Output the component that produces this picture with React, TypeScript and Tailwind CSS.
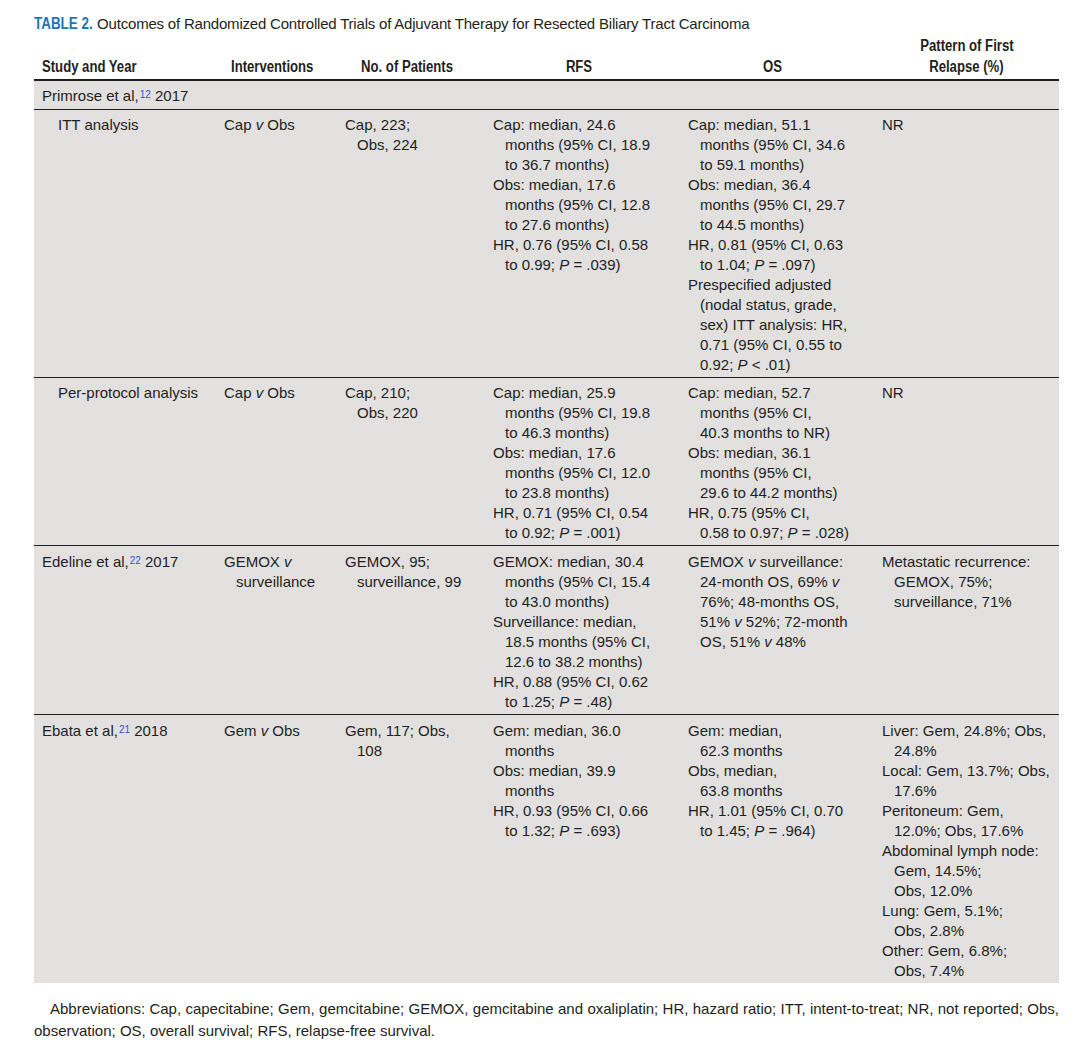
import React from "react";

type Line = React.ReactNode;
type Para = Line[];

const P = () => <span className="italic">P</span>;
const V = () => <span className="italic">v</span>;

const Sup = ({ n }: { n: string }) => (
  <sup className="text-[10px] text-[#3b4fd6] relative -top-[3px] ml-[1px]">{n}</sup>
);

function Cell({ paras, indent = false }: { paras: Para[]; indent?: boolean }) {
  return (
    <div className={`${indent ? "pl-6" : "pl-2"} pr-2`}>
      {paras.map((p, i) => (
        <div key={i}>
          {p.map((l, j) => (
            <div key={j} className={`h-5 leading-5 whitespace-nowrap ${j > 0 ? "pl-3" : ""}`}>
              {l}
            </div>
          ))}
        </div>
      ))}
    </div>
  );
}

type Row = { cells: Para[][]; indentFirst?: boolean };

const rows: Row[] = [
  {
    indentFirst: true,
    cells: [
      [["ITT analysis"]],
      [[<>Cap <V /> Obs</>]],
      [["Cap, 223;", "Obs, 224"]],
      [
        ["Cap: median, 24.6", "months (95% CI, 18.9", "to 36.7 months)"],
        ["Obs: median, 17.6", "months (95% CI, 12.8", "to 27.6 months)"],
        ["HR, 0.76 (95% CI, 0.58", <>to 0.99; <P /> = .039)</>],
      ],
      [
        ["Cap: median, 51.1", "months (95% CI, 34.6", "to 59.1 months)"],
        ["Obs: median, 36.4", "months (95% CI, 29.7", "to 44.5 months)"],
        ["HR, 0.81 (95% CI, 0.63", <>to 1.04; <P /> = .097)</>],
        ["Prespecified adjusted", "(nodal status, grade,", "sex) ITT analysis: HR,", "0.71 (95% CI, 0.55 to", <>0.92; <P /> &lt; .01)</>],
      ],
      [["NR"]],
    ],
  },
  {
    indentFirst: true,
    cells: [
      [["Per-protocol analysis"]],
      [[<>Cap <V /> Obs</>]],
      [["Cap, 210;", "Obs, 220"]],
      [
        ["Cap: median, 25.9", "months (95% CI, 19.8", "to 46.3 months)"],
        ["Obs: median, 17.6", "months (95% CI, 12.0", "to 23.8 months)"],
        ["HR, 0.71 (95% CI, 0.54", <>to 0.92; <P /> = .001)</>],
      ],
      [
        ["Cap: median, 52.7", "months (95% CI,", "40.3 months to NR)"],
        ["Obs: median, 36.1", "months (95% CI,", "29.6 to 44.2 months)"],
        ["HR, 0.75 (95% CI,", <>0.58 to 0.97; <P /> = .028)</>],
      ],
      [["NR"]],
    ],
  },
  {
    cells: [
      [[<>Edeline et al,<Sup n="22" /> 2017</>]],
      [[<>GEMOX <V /></>, "surveillance"]],
      [["GEMOX, 95;", "surveillance, 99"]],
      [
        ["GEMOX: median, 30.4", "months (95% CI, 15.4", "to 43.0 months)"],
        ["Surveillance: median,", "18.5 months (95% CI,", "12.6 to 38.2 months)"],
        ["HR, 0.88 (95% CI, 0.62", <>to 1.25; <P /> = .48)</>],
      ],
      [
        [
          <>GEMOX <V /> surveillance:</>,
          <>24-month OS, 69% <V /></>,
          "76%; 48-months OS,",
          <>51% <V /> 52%; 72-month</>,
          <>OS, 51% <V /> 48%</>,
        ],
      ],
      [["Metastatic recurrence:", "GEMOX, 75%;", "surveillance, 71%"]],
    ],
  },
  {
    cells: [
      [[<>Ebata et al,<Sup n="21" /> 2018</>]],
      [[<>Gem <V /> Obs</>]],
      [["Gem, 117; Obs,", "108"]],
      [
        ["Gem: median, 36.0", "months"],
        ["Obs: median, 39.9", "months"],
        ["HR, 0.93 (95% CI, 0.66", <>to 1.32; <P /> = .693)</>],
      ],
      [
        ["Gem: median,", "62.3 months"],
        ["Obs, median,", "63.8 months"],
        ["HR, 1.01 (95% CI, 0.70", <>to 1.45; <P /> = .964)</>],
      ],
      [
        ["Liver: Gem, 24.8%; Obs,", "24.8%"],
        ["Local: Gem, 13.7%; Obs,", "17.6%"],
        ["Peritoneum: Gem,", "12.0%; Obs, 17.6%"],
        ["Abdominal lymph node:", "Gem, 14.5%;", "Obs, 12.0%"],
        ["Lung: Gem, 5.1%;", "Obs, 2.8%"],
        ["Other: Gem, 6.8%;", "Obs, 7.4%"],
      ],
    ],
  },
];

const cols = "grid grid-cols-[182px_121px_148px_195px_194px_185px]";

const H = ({ children, left = false }: { children: React.ReactNode; left?: boolean }) => (
  <span className={`inline-block whitespace-nowrap scale-x-[0.82] ${left ? "origin-left" : "origin-center"}`}>
    {children}
  </span>
);

export default function App() {
  return (
    <div className="w-[1076px] h-[1064px] bg-white text-[#231f20] font-['Liberation_Sans',Arial,sans-serif] text-[15px] pl-[34px] pr-[17px] pt-[14px]">
      <div className="h-5 leading-5 whitespace-nowrap">
        <span className="inline-block font-bold text-[16px] text-[#1b75bb] scale-x-[0.84] origin-left mr-[-11px]">
          TABLE 2.
        </span>{" "}
        <span className="text-[15px] tracking-[-0.2px]">
          Outcomes of Randomized Controlled Trials of Adjuvant Therapy for Resected Biliary Tract Carcinoma
        </span>
      </div>

      <div className={`${cols} font-bold text-[16px] leading-[21px] mt-[1px] pb-[2px] border-b-2 border-[#231f20]`}>
        <div className="pl-2 pr-4 flex items-end">
          <H left>Study and Year</H>
        </div>
        <div className="pl-2 pr-4 flex items-end justify-center">
          <H>Interventions</H>
        </div>
        <div className="pl-2 pr-4 flex items-end justify-center">
          <H>No. of Patients</H>
        </div>
        <div className="pl-2 pr-4 flex items-end justify-center">
          <H>RFS</H>
        </div>
        <div className="pl-2 pr-4 flex items-end justify-center">
          <H>OS</H>
        </div>
        <div className="pl-2 pr-2 flex flex-col items-center text-center">
          <H>Pattern of First</H>
          <H>Relapse (%)</H>
        </div>
      </div>

      <div className="bg-[#e2e1e0]">
        <div className="pl-2 pt-[5px] pb-[4px] h-[29px] leading-5 border-b border-[#231f20]">
          Primrose et al,<Sup n="12" /> 2017
        </div>
        {rows.map((r, i) => (
          <div
            key={i}
            className={`${cols} ${i >= 2 ? "pt-[6px]" : "pt-[5px]"} ${i < rows.length - 1 ? "pb-[2px] border-b border-[#231f20]" : "pb-[2px]"}`}
          >
            {r.cells.map((c, j) => (
              <Cell key={j} paras={c} indent={j === 0 && !!r.indentFirst} />
            ))}
          </div>
        ))}
      </div>

      <p className="mt-[15px] leading-[22px] text-justify indent-4">
        Abbreviations: Cap, capecitabine; Gem, gemcitabine; GEMOX, gemcitabine and oxaliplatin; HR, hazard ratio; ITT,
        intent-to-treat; NR, not reported; Obs, observation; OS, overall survival; RFS, relapse-free survival.
      </p>
    </div>
  );
}
